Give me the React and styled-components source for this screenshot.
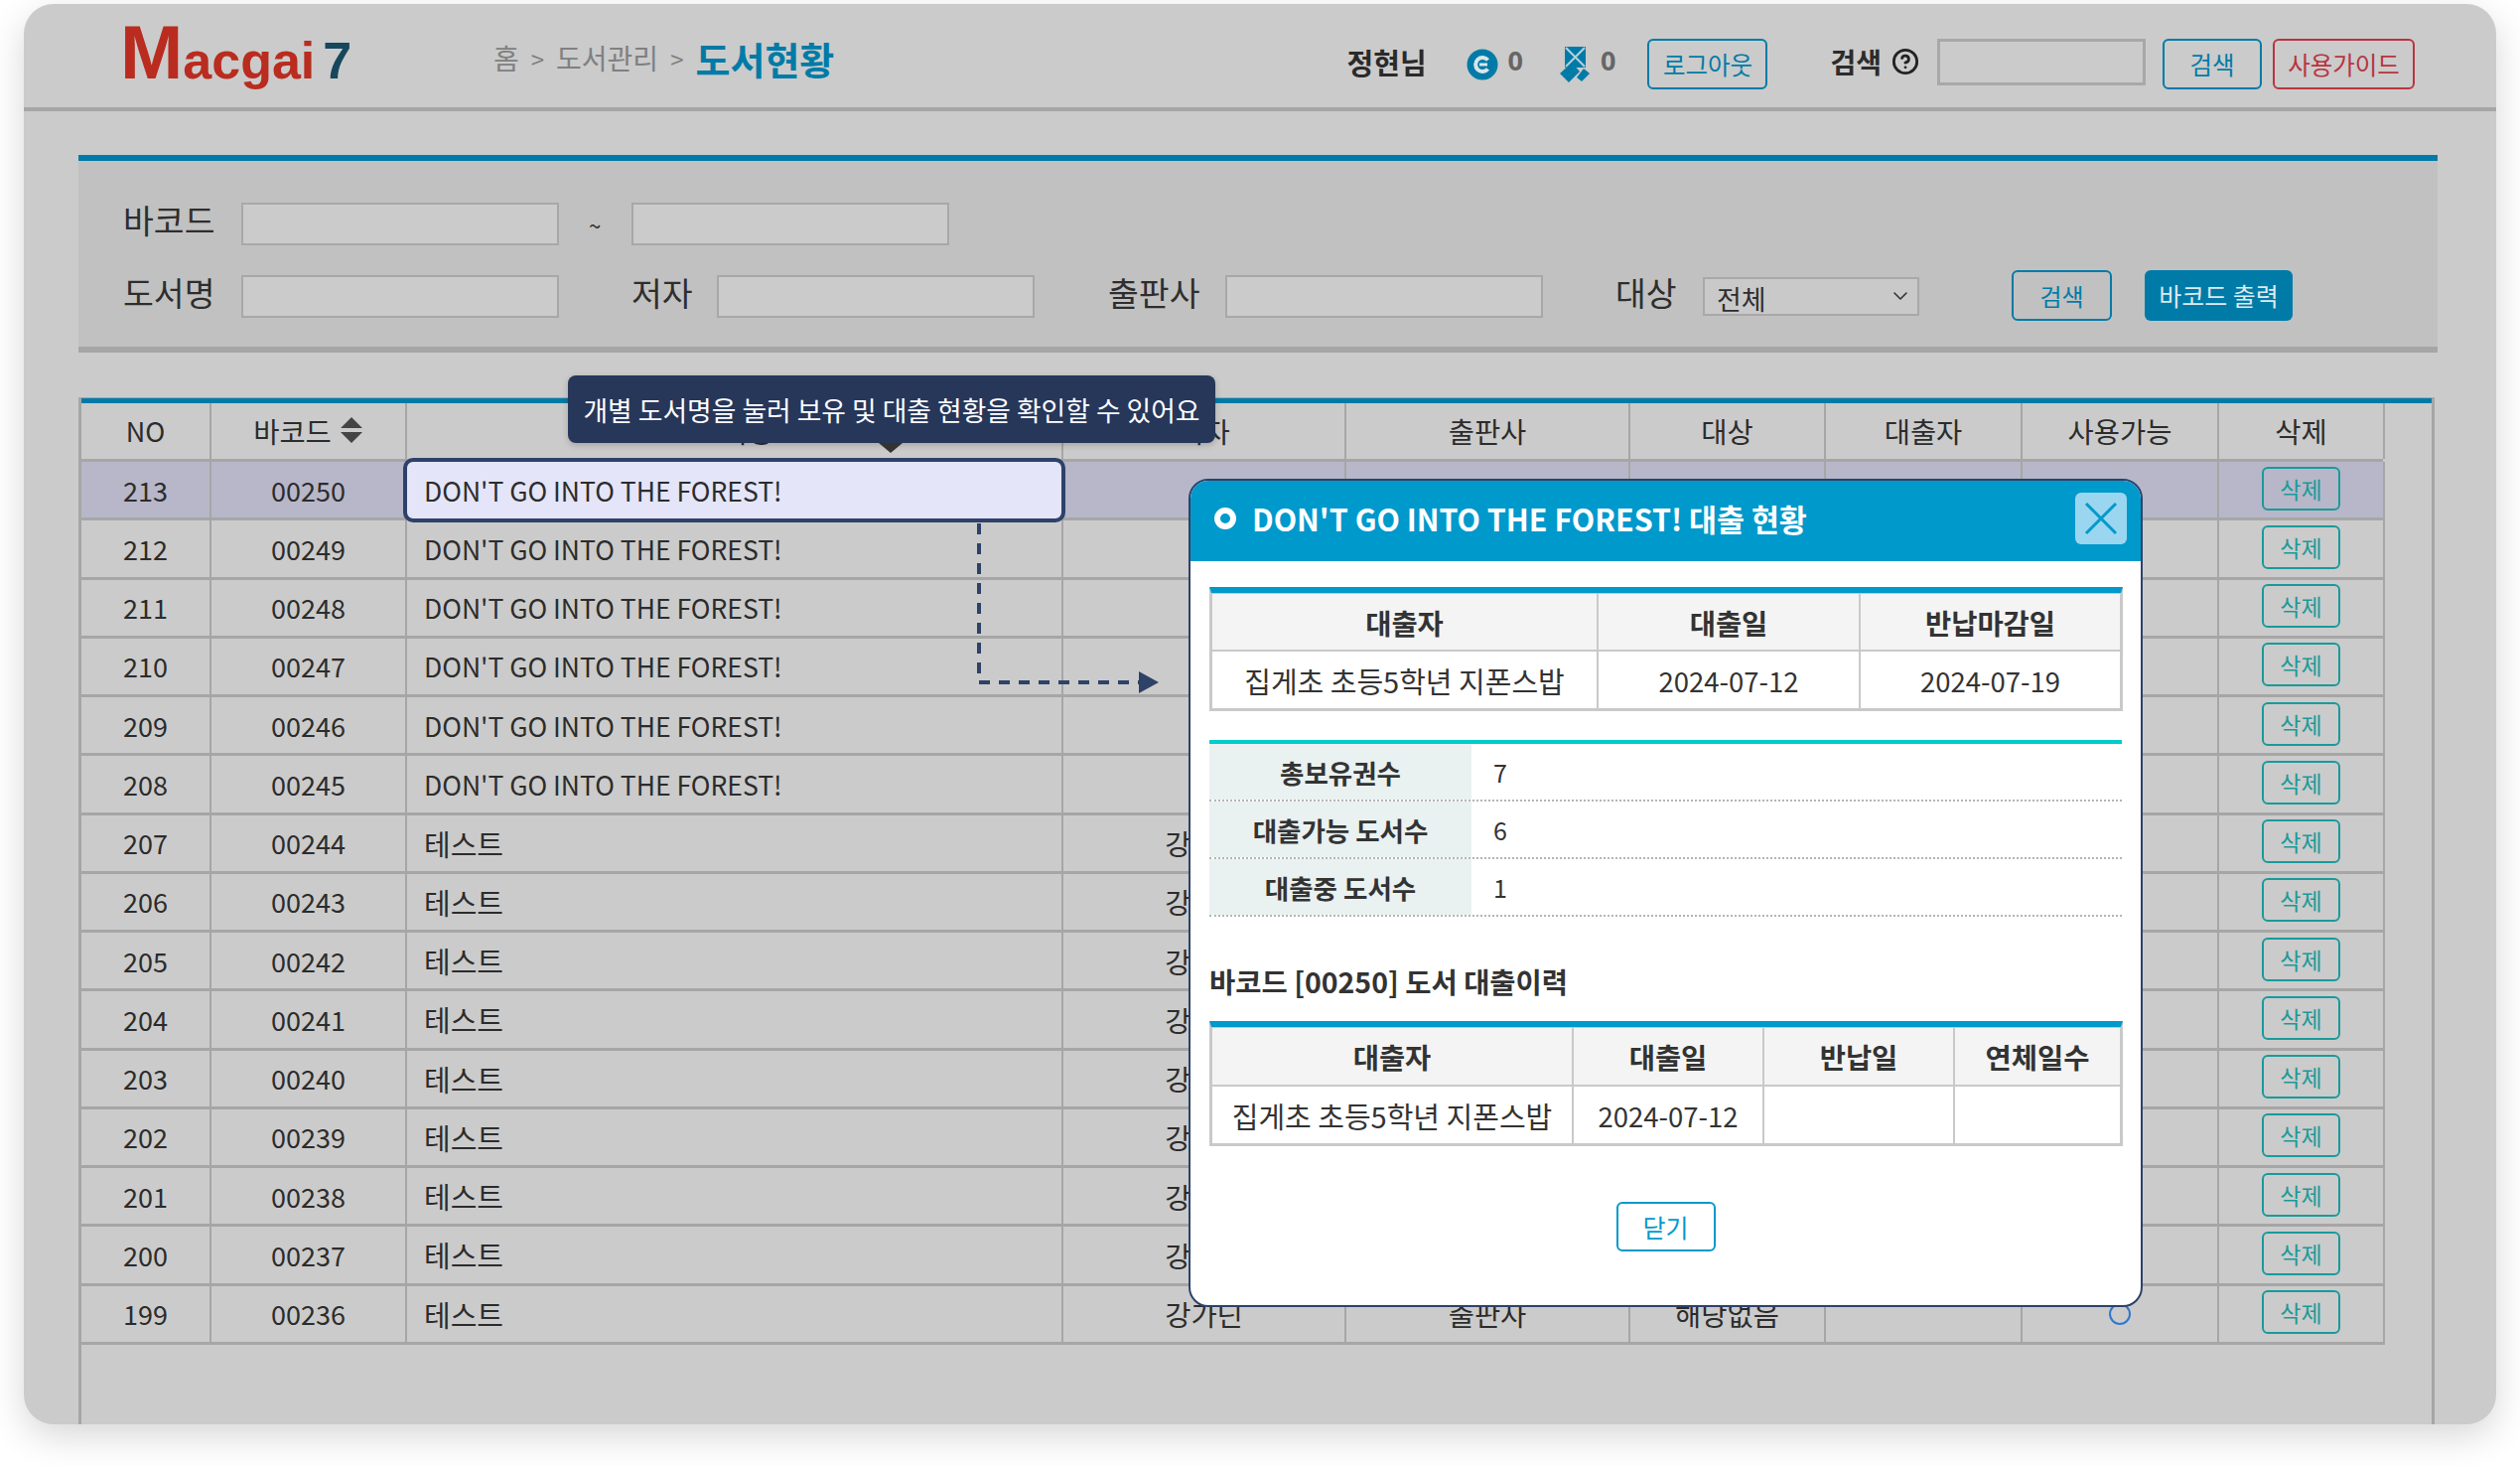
import React from "react";
import styled, { createGlobalStyle } from "styled-components";
import { CircleHelp, ChevronDown } from "lucide-react";

const Global = createGlobalStyle`
  html, body { margin: 0; padding: 0; background: #fff; }
  * { box-sizing: border-box; }
  body { font-family: "Noto Sans CJK KR", "Noto Sans", sans-serif; color: #2c2c2c; }
`;

const BLUE = "#007ba7";
const SKY = "#0099cc";
const LINE = "#a6a6a6";
const NAVY = "#2e4268";

const COLS = "131px 197px 661px 285px 286px 197px 198px 198px 167px";

const books = [
  [213, "00250", "DON'T GO INTO THE FOREST!", ""],
  [212, "00249", "DON'T GO INTO THE FOREST!", ""],
  [211, "00248", "DON'T GO INTO THE FOREST!", ""],
  [210, "00247", "DON'T GO INTO THE FOREST!", ""],
  [209, "00246", "DON'T GO INTO THE FOREST!", ""],
  [208, "00245", "DON'T GO INTO THE FOREST!", ""],
  [207, "00244", "테스트", "강가딘"],
  [206, "00243", "테스트", "강가딘"],
  [205, "00242", "테스트", "강가딘"],
  [204, "00241", "테스트", "강가딘"],
  [203, "00240", "테스트", "강가딘"],
  [202, "00239", "테스트", "강가딘"],
  [201, "00238", "테스트", "강가딘"],
  [200, "00237", "테스트", "강가딘"],
  [199, "00236", "테스트", "강가딘"],
];

function App() {
  return (
    <Page>
      <Global />
      <Card>
        <TopBar>
          <Logo>
            <LogoBig>M</LogoBig>
            <LogoSmall>acgai</LogoSmall>
            <LogoNum>7</LogoNum>
          </Logo>
          <Crumbs>
            <span>홈</span>
            <Sep>&gt;</Sep>
            <span>도서관리</span>
            <Sep>&gt;</Sep>
            <CrumbNow>도서현황</CrumbNow>
          </Crumbs>
          <UserArea>
            <UserName>정현님</UserName>
            <Point $gap={10} $mr={37}>
              <svg width="32" height="32" viewBox="0 0 32 32">
                <circle cx="16" cy="16" r="15.5" fill={BLUE} />
                <path d="M21.5 11.5a7 7 0 1 0 0 9" fill="none" stroke="#d8e6ec" strokeWidth="4" />
                <path d="M13 16h8" stroke="#d8e6ec" strokeWidth="3" />
              </svg>
              <PointNum>0</PointNum>
            </Point>
            <Point $gap={11} $mr={21}>
              <svg width="30" height="36" viewBox="0 0 30 36">
                <rect x="5" y="0" width="21" height="21" fill={BLUE} />
                <path d="M6 1l19 19M25 1L6 20" stroke="#b8d0da" strokeWidth="2" />
                <path d="M12 16L20 25 9 36 0 27Z" fill={BLUE} />
                <path d="M24 22l6 5-8 8-5-4Z" fill={BLUE} />
              </svg>
              <PointNum>0</PointNum>
            </Point>
            <TopButton $w={121} $c={BLUE}>로그아웃</TopButton>
            <SearchLabel>검색</SearchLabel>
            <CircleHelp size={28} strokeWidth={2.4} color="#222" style={{ marginBottom: 5 }} />
            <TopInput />
            <TopButton $w={100} $c={BLUE}>검색</TopButton>
            <TopButton $w={143} $c="#b8353f">사용가이드</TopButton>
          </UserArea>
        </TopBar>

        <Filter>
          <FilterRow>
            <Label $w={119}>바코드</Label>
            <Field />
            <Tilde>~</Tilde>
            <Field />
          </FilterRow>
          <FilterRow>
            <Label $w={119}>도서명</Label>
            <Field />
            <Label $w={86} $ml={73}>저자</Label>
            <Field />
            <Label $w={118} $ml={74}>출판사</Label>
            <Field />
            <Label $w={88} $ml={73}>대상</Label>
            <PickerBox>
              <Picker defaultValue="전체">
                <option>전체</option>
              </Picker>
              <PickerArrow>
                <ChevronDown size={24} strokeWidth={1.6} color="#333" />
              </PickerArrow>
            </PickerBox>
            <OutlineBtn>검색</OutlineBtn>
            <SolidBtn>바코드 출력</SolidBtn>
          </FilterRow>
        </Filter>

        <ListWrap>
          <HeadRow>
            <HeadCell $latin>NO</HeadCell>
            <HeadCell>
              바코드
              <svg width="24" height="28" viewBox="0 0 24 28">
                <path d="M12 1l11 11H1Z M12 27L1 16h22Z" fill="#444" />
              </svg>
            </HeadCell>
            <HeadCell>도서명</HeadCell>
            <HeadCell>저자</HeadCell>
            <HeadCell>출판사</HeadCell>
            <HeadCell>대상</HeadCell>
            <HeadCell>대출자</HeadCell>
            <HeadCell>사용가능</HeadCell>
            <HeadCell>삭제</HeadCell>
          </HeadRow>
          {books.map(([no, code, title, author], i) => (
            <BookRow key={no} $picked={i === 0}>
              <Cell>{no}</Cell>
              <Cell>{code}</Cell>
              {i === 0 ? (
                <TitleCell>
                  <Picked>{title}</Picked>
                </TitleCell>
              ) : (
                <TitleCell $hangul={title === "테스트"}>{title}</TitleCell>
              )}
              <Cell $hangul>{author}</Cell>
              <Cell $hangul>{i === 14 && "출판사"}</Cell>
              <Cell $hangul>{i === 14 && "해당없음"}</Cell>
              <Cell />
              <Cell>{i === 14 && <Ring />}</Cell>
              <Cell>
                <DeleteBtn>삭제</DeleteBtn>
              </Cell>
            </BookRow>
          ))}
        </ListWrap>

        <Tip>
          개별 도서명을 눌러 보유 및 대출 현황을 확인할 수 있어요
          <TipTail />
        </Tip>

        <Pointer width="186" height="176" viewBox="0 0 186 176">
          <path d="M3 2V162H165" fill="none" stroke={NAVY} strokeWidth="4" strokeDasharray="11 9" />
          <path d="M164 151l20 11-20 11Z" fill={NAVY} />
        </Pointer>

        <Modal>
          <ModalHead>
            <Bullet />
            <ModalTitle>DON'T GO INTO THE FOREST! 대출 현황</ModalTitle>
            <CloseBtn>
              <svg width="34" height="34" viewBox="0 0 34 34">
                <path d="M2 2l30 30M32 2L2 32" stroke={SKY} strokeWidth="3" />
              </svg>
            </CloseBtn>
          </ModalHead>
          <ModalBody>
            <LoanTable>
              <LoanRow $cols="389px 264px 263px" $h={58}>
                <LoanHead>대출자</LoanHead>
                <LoanHead>대출일</LoanHead>
                <LoanHead>반납마감일</LoanHead>
              </LoanRow>
              <LoanRow $cols="389px 264px 263px" $h={59}>
                <LoanCell>집게초 초등5학년 지폰스밥</LoanCell>
                <LoanCell $num>2024-07-12</LoanCell>
                <LoanCell $num>2024-07-19</LoanCell>
              </LoanRow>
            </LoanTable>

            <Stats>
              <StatRow>
                <StatKey>총보유권수</StatKey>
                <StatValue>7</StatValue>
              </StatRow>
              <StatRow>
                <StatKey>대출가능 도서수</StatKey>
                <StatValue>6</StatValue>
              </StatRow>
              <StatRow>
                <StatKey>대출중 도서수</StatKey>
                <StatValue>1</StatValue>
              </StatRow>
            </Stats>

            <HistoryTitle>바코드 [00250] 도서 대출이력</HistoryTitle>

            <LoanTable>
              <LoanRow $cols="364px 192px 192px 168px" $h={59}>
                <LoanHead>대출자</LoanHead>
                <LoanHead>대출일</LoanHead>
                <LoanHead>반납일</LoanHead>
                <LoanHead>연체일수</LoanHead>
              </LoanRow>
              <LoanRow $cols="364px 192px 192px 168px" $h={59}>
                <LoanCell>집게초 초등5학년 지폰스밥</LoanCell>
                <LoanCell $num>2024-07-12</LoanCell>
                <LoanCell />
                <LoanCell />
              </LoanRow>
            </LoanTable>

            <ModalFoot>
              <ShutBtn>닫기</ShutBtn>
            </ModalFoot>
          </ModalBody>
        </Modal>
      </Card>
    </Page>
  );
}

const Page = styled.div`
  width: 2538px;
  height: 1476px;
  padding: 4px 24px 0;
  overflow: hidden;
`;

const Card = styled.div`
  position: relative;
  width: 2490px;
  height: 1430px;
  background: #cbcbcb;
  border-radius: 30px;
  box-shadow: 0 12px 36px rgba(0, 0, 0, 0.16);
  overflow: hidden;
`;

const TopBar = styled.header`
  display: flex;
  align-items: center;
  height: 108px;
  border-bottom: 4px solid ${LINE};
  padding-left: 97px;
`;

const Logo = styled.div`
  display: flex;
  align-items: baseline;
  width: 376px;
  font-family: "Liberation Sans", sans-serif;
  font-weight: 700;
  line-height: 1;
  color: #b92c1f;
  margin-top: -6px;
`;

const LogoBig = styled.span`
  font-size: 76px;
`;

const LogoSmall = styled.span`
  font-size: 52px;
`;

const LogoNum = styled.span`
  font-size: 52px;
  color: #15485c;
  margin-left: 8px;
`;

const Crumbs = styled.div`
  display: flex;
  align-items: center;
  gap: 12px;
  font-size: 28px;
  color: #808080;
  margin-top: 4px;
`;

const Sep = styled.span`
  font-size: 24px;
`;

const CrumbNow = styled.strong`
  font-size: 38px;
  font-weight: 700;
  color: ${BLUE};
`;

const UserArea = styled.div`
  display: flex;
  align-items: center;
  margin-left: auto;
  padding-right: 82px;
  margin-top: 17px;
`;

const UserName = styled.span`
  font-size: 29px;
  font-weight: 700;
  color: #2a2a2a;
  margin: 0 40px 6px 0;
`;

const Point = styled.div`
  display: flex;
  align-items: center;
  gap: ${(p) => p.$gap}px;
  margin-right: ${(p) => p.$mr}px;
`;

const PointNum = styled.span`
  font-family: "Noto Sans", sans-serif;
  font-size: 27px;
  font-weight: 700;
  color: #666;
  margin-top: -8px;
`;

const TopButton = styled.button`
  width: ${(p) => p.$w}px;
  height: 51px;
  margin-left: 11px;
  background: transparent;
  border: 2px solid ${(p) => p.$c};
  border-radius: 6px;
  color: ${(p) => p.$c};
  font-family: inherit;
  font-size: 24.5px;
  padding: 0;
`;

const SearchLabel = styled.span`
  font-size: 28px;
  font-weight: 700;
  margin: 0 10px 6px 63px;
`;

const TopInput = styled.input`
  width: 210px;
  height: 47px;
  margin: 0 6px 4px 18px;
  background: transparent;
  border: 3px solid #a8a8a8;
`;

const Filter = styled.section`
  width: 2376px;
  height: 199px;
  margin: 44px 0 0 55px;
  padding: 42px 0 0 45px;
  display: flex;
  flex-direction: column;
  gap: 30px;
  background: #c1c1c1;
  border-top: 6px solid ${BLUE};
  border-bottom: 6px solid ${LINE};
`;

const FilterRow = styled.div`
  display: flex;
  align-items: center;
  height: 43px;
`;

const Label = styled.label`
  width: ${(p) => p.$w}px;
  margin: 0 0 11px ${(p) => p.$ml || 0}px;
  font-size: 33.5px;
  color: #2e2e2e;
  flex: none;
`;

const Field = styled.input`
  width: 320px;
  height: 43px;
  flex: none;
  background: #cbcbcb;
  border: 2px solid #a8a8a8;
`;

const Tilde = styled.span`
  width: 73px;
  padding-left: 30px;
  font-size: 22px;
  flex: none;
`;

const PickerBox = styled.div`
  position: relative;
  width: 218px;
  height: 39px;
  flex: none;
`;

const Picker = styled.select`
  appearance: none;
  width: 100%;
  height: 100%;
  background: #c9c9c9;
  border: 2px solid #a8a8a8;
  border-radius: 0;
  font-family: inherit;
  font-size: 27px;
  color: #2e2e2e;
  padding: 0 0 0 12px;
`;

const PickerArrow = styled.span`
  position: absolute;
  right: 7px;
  top: 7px;
  display: flex;
  pointer-events: none;
`;

const OutlineBtn = styled.button`
  width: 101px;
  height: 51px;
  flex: none;
  margin: 0 0 3px 93px;
  background: transparent;
  border: 2px solid ${BLUE};
  border-radius: 6px;
  color: ${BLUE};
  font-family: inherit;
  font-size: 24px;
  padding: 0;
`;

const SolidBtn = styled.button`
  width: 149px;
  height: 51px;
  flex: none;
  margin: 0 0 3px 33px;
  background: ${BLUE};
  border: 0;
  border-radius: 6px;
  color: #dceaf0;
  font-family: inherit;
  font-size: 25px;
  padding: 0;
`;

const ListWrap = styled.section`
  width: 2373px;
  height: 1050px;
  margin: 45px 0 0 55px;
  border-left: 3px solid ${LINE};
  border-right: 3px solid ${LINE};
  border-top: 1px solid ${LINE};
  box-shadow: inset 0 5px 0 ${BLUE};
  padding-top: 5px;
`;

const HeadRow = styled.div`
  display: grid;
  grid-template-columns: ${COLS};
  width: 2318px;
  height: 59px;
  border-bottom: 3px solid ${LINE};
`;

const HeadCell = styled.div`
  display: flex;
  align-items: center;
  justify-content: center;
  gap: 8px;
  font-size: ${(p) => (p.$latin ? 27 : 28.5)}px;
  border-right: 2px solid ${LINE};
  padding-bottom: 2px;
`;

const BookRow = styled.div`
  display: grid;
  grid-template-columns: ${COLS};
  width: 2320px;
  height: 59.25px;
  border-bottom: 3px solid ${LINE};
  background: ${(p) => (p.$picked ? "#b7b7c9" : "transparent")};
`;

const Cell = styled.div`
  display: flex;
  align-items: center;
  justify-content: center;
  font-size: ${(p) => (p.$hangul ? 28.5 : 27)}px;
  border-right: 2px solid ${LINE};
  white-space: nowrap;
`;

const TitleCell = styled.div`
  position: relative;
  display: flex;
  align-items: center;
  padding-left: 17px;
  font-size: ${(p) => (p.$hangul ? 29 : 26.5)}px;
  border-right: 2px solid ${LINE};
  white-space: nowrap;
`;

const Ring = styled.span`
  width: 22px;
  height: 22px;
  border: 2px solid #2f78d0;
  border-radius: 50%;
`;

const DeleteBtn = styled.button`
  width: 79px;
  height: 44px;
  margin-bottom: 3px;
  background: transparent;
  border: 2px solid #1a9a9a;
  border-radius: 6px;
  color: #1a9a9a;
  font-family: inherit;
  font-size: 23px;
  padding: 0;
`;

const Picked = styled.div`
  position: absolute;
  left: -4px;
  top: -4px;
  width: 667px;
  height: 65px;
  display: flex;
  align-items: center;
  padding-left: 17px;
  background: #e4e5f9;
  border: 4px solid ${NAVY};
  border-radius: 10px;
`;

const Tip = styled.div`
  position: absolute;
  left: 548px;
  top: 374px;
  width: 652px;
  height: 68px;
  display: flex;
  align-items: center;
  justify-content: center;
  background: #26375a;
  color: #fff;
  border-radius: 8px;
  font-size: 26.8px;
  white-space: nowrap;
  box-shadow: 0 2px 6px rgba(0, 0, 0, 0.2);
`;

const TipTail = styled.span`
  position: absolute;
  left: 313px;
  top: 68px;
  border-left: 12px solid transparent;
  border-right: 12px solid transparent;
  border-top: 10px solid #333;
`;

const Pointer = styled.svg`
  position: absolute;
  left: 959px;
  top: 521px;
`;

const Modal = styled.div`
  position: absolute;
  left: 1173px;
  top: 478px;
  width: 961px;
  height: 834px;
  background: #fff;
  border: 2px solid ${NAVY};
  border-radius: 20px;
  overflow: hidden;
`;

const ModalHead = styled.div`
  display: flex;
  align-items: center;
  height: 81px;
  padding: 0 14px 5px 24px;
  background: ${SKY};
`;

const Bullet = styled.span`
  width: 22px;
  height: 22px;
  border: 6px solid #fff;
  border-radius: 50%;
  background: ${SKY};
  flex: none;
`;

const ModalTitle = styled.h2`
  margin: 0 0 0 16px;
  font-size: 30.4px;
  font-weight: 700;
  color: #fff;
  white-space: nowrap;
`;

const CloseBtn = styled.button`
  margin-left: auto;
  width: 52px;
  height: 52px;
  display: flex;
  align-items: center;
  justify-content: center;
  background: #9ad6ef;
  border: 0;
  border-radius: 6px;
  padding: 0;
`;

const ModalBody = styled.div`
  padding: 26px 19px 0;
`;

const LoanTable = styled.div`
  width: 920px;
  border-top: 6px solid ${SKY};
  border-bottom: 2px solid #c9c9c9;
  border-left: 2px solid #c9c9c9;
  border-right: 2px solid #c9c9c9;
`;

const LoanRow = styled.div`
  display: grid;
  grid-template-columns: ${(p) => p.$cols};
  height: ${(p) => p.$h}px;
`;

const LoanHead = styled.div`
  display: flex;
  align-items: center;
  justify-content: center;
  background: #f4f4f4;
  border: 1px solid #c9c9c9;
  font-size: 28.5px;
  font-weight: 700;
  color: #333;
`;

const LoanCell = styled.div`
  display: flex;
  align-items: center;
  justify-content: center;
  border: 1px solid #c9c9c9;
  font-size: ${(p) => (p.$num ? 27.5 : 29)}px;
  color: #333;
  white-space: nowrap;
`;

const Stats = styled.div`
  margin-top: 29px;
  border-top: 4px solid #00cccc;
`;

const StatRow = styled.div`
  display: grid;
  grid-template-columns: 264px 1fr;
  height: 58px;
  border-bottom: 2px dotted #b5b5b5;
`;

const StatKey = styled.div`
  display: flex;
  align-items: center;
  justify-content: center;
  background: #e9f1f1;
  font-size: 26.5px;
  font-weight: 700;
  color: #333;
`;

const StatValue = styled.div`
  display: flex;
  align-items: center;
  padding-left: 22px;
  font-size: 25px;
  color: #333;
`;

const HistoryTitle = styled.h3`
  margin: 46px 0 21px;
  height: 38px;
  font-size: 28.5px;
  line-height: 38px;
  font-weight: 700;
  color: #333;
  white-space: nowrap;
`;

const ModalFoot = styled.div`
  display: flex;
  justify-content: center;
  margin-top: 56px;
`;

const ShutBtn = styled.button`
  width: 100px;
  height: 50px;
  background: #fff;
  border: 2px solid ${SKY};
  border-radius: 6px;
  color: ${SKY};
  font-family: inherit;
  font-size: 25px;
  padding: 0;
`;

export default App;
